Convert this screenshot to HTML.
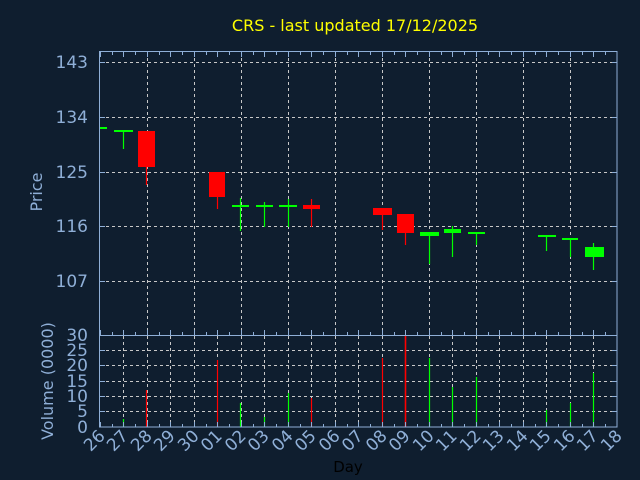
<!DOCTYPE html>
<html><head><meta charset="utf-8"><style>
html,body{margin:0;padding:0;background:#0f1e2f;}
svg{display:block;font-family:"DejaVu Sans","Liberation Sans",sans-serif;}
</style></head><body>
<svg width="640" height="480" viewBox="0 0 640 480" xmlns="http://www.w3.org/2000/svg">
<defs>
<path id="tk" d="M100.5 0v-5M112.5 0v-3M123.5 0v-5M135.5 0v-3M147.5 0v-5M159.5 0v-3M170.5 0v-5M182.5 0v-3M194.5 0v-5M206.5 0v-3M217.5 0v-5M229.5 0v-3M241.5 0v-5M253.5 0v-3M264.5 0v-5M276.5 0v-3M288.5 0v-5M300.5 0v-3M311.5 0v-5M323.5 0v-3M335.5 0v-5M347.5 0v-3M358.5 0v-5M370.5 0v-3M382.5 0v-5M394.5 0v-3M405.5 0v-5M417.5 0v-3M429.5 0v-5M441.5 0v-3M452.5 0v-5M464.5 0v-3M476.5 0v-5M488.5 0v-3M499.5 0v-5M511.5 0v-3M523.5 0v-5M535.5 0v-3M546.5 0v-5M558.5 0v-3M570.5 0v-5M582.5 0v-3M593.5 0v-5M605.5 0v-3"/>
</defs>
<rect width="640" height="480" fill="#0f1e2f"/>
<text x="355" y="31" fill="#ffff00" font-size="16" text-anchor="middle">CRS - last updated 17/12/2025</text>
<g stroke="#c8c8c8" stroke-width="1" stroke-dasharray="3,3" fill="none">
<path d="M100 62.5H617M100 117.5H617M100 172.5H617M100 226.5H617M100 281.5H617"/>
<path d="M147.5 52V335M194.5 52V335M241.5 52V335M288.5 52V335M335.5 52V335M382.5 52V335M429.5 52V335M476.5 52V335M523.5 52V335M570.5 52V335"/>
<path d="M100 350.5H617M100 365.5H617M100 381.5H617M100 396.5H617M100 411.5H617"/>
<path d="M123.5 336V427M147.5 336V427M170.5 336V427M194.5 336V427M217.5 336V427M241.5 336V427M264.5 336V427M288.5 336V427M311.5 336V427M335.5 336V427M358.5 336V427M382.5 336V427M405.5 336V427M429.5 336V427M452.5 336V427M476.5 336V427M499.5 336V427M523.5 336V427M546.5 336V427M570.5 336V427M593.5 336V427"/>
</g>
<g fill="#00ff00" stroke="#00ff00">
<rect x="100" y="127" width="7" height="2" stroke="none"/>
<path d="M123.5 131V149M240.5 198V231M264.5 202V227M288.5 199V227M429.5 232V264M452.5 226V257M476.5 232V245M546.5 235V251M570.5 238V257M593.5 243V270" stroke-width="1.2"/>
<rect x="114" y="130" width="19" height="2" stroke="none"/>
<rect x="232" y="205" width="17" height="2" stroke="none"/>
<rect x="256" y="205" width="17" height="2" stroke="none"/>
<rect x="279" y="205" width="18" height="2" stroke="none"/>
<rect x="420" y="232" width="19" height="4" stroke="none"/>
<rect x="444" y="229" width="17" height="4" stroke="none"/>
<rect x="468" y="232" width="17" height="2" stroke="none"/>
<rect x="538" y="235" width="18" height="2" stroke="none"/>
<rect x="562" y="238" width="16" height="2" stroke="none"/>
<rect x="585" y="247" width="19" height="10" stroke="none"/>
</g>
<g fill="#ff0000" stroke="#ff0000">
<path d="M146.5 167V185M217.5 197V209M311.5 199V227M382.5 215V230M405.5 233V245" stroke-width="1.2"/>
<rect x="138" y="131" width="17" height="36" stroke="none"/>
<rect x="209" y="172" width="16" height="25" stroke="none"/>
<rect x="303" y="205" width="17" height="4" stroke="none"/>
<rect x="373" y="208" width="19" height="7" stroke="none"/>
<rect x="397" y="214" width="17" height="19" stroke="none"/>
</g>
<g stroke-width="1.2">
<path d="M123.5 427V419M240.5 427V403M264.5 427V417M288.5 427V393M429.5 427V358M452.5 427V387M476.5 427V377M546.5 427V410M570.5 427V403M593.5 427V373" stroke="#00ff00"/>
<path d="M146.5 427V390M217.5 427V360M311.5 427V398M382.5 427V358" stroke="#ff0000"/>
<path d="M405.5 427V336" stroke="#ff0000" stroke-width="1.6"/>
</g>
<g stroke="#8fafd7" fill="none">
<rect x="99.5" y="51.5" width="517.5" height="375.5"/>
<path d="M100 335.5H617"/>
<use href="#tk" transform="translate(0 427)"/>
<use href="#tk" transform="translate(0 335)"/>
<use href="#tk" transform="translate(0 52) scale(1 -1)"/>
<path d="M100 62.5h5M100 117.5h5M100 172.5h5M100 226.5h5M100 281.5h5M612 62.5h5M612 117.5h5M612 172.5h5M612 226.5h5M612 281.5h5"/>
<path d="M100 350.5h5M100 365.5h5M100 381.5h5M100 396.5h5M100 411.5h5M612 350.5h5M612 365.5h5M612 381.5h5M612 396.5h5M612 411.5h5"/>
</g>
<g fill="#8fafd7" font-size="17" text-anchor="end">
<text x="88" y="68">143</text><text x="88" y="123">134</text><text x="88" y="178">125</text><text x="88" y="232">116</text><text x="88" y="287">107</text>
<text x="88" y="341">30</text><text x="88" y="356">25</text><text x="88" y="371">20</text><text x="88" y="387">15</text><text x="88" y="402">10</text><text x="88" y="417">5</text><text x="88" y="433">0</text>
</g>
<text transform="translate(42 192) rotate(-90)" fill="#8fafd7" font-size="16" text-anchor="middle">Price</text>
<text transform="translate(53 381) rotate(-90)" fill="#8fafd7" font-size="16" text-anchor="middle">Volume (0000)</text>
<g fill="#8fafd7" font-size="17" text-anchor="end">
<text transform="translate(106 437) rotate(-45)">26</text>
<text transform="translate(129 437) rotate(-45)">27</text>
<text transform="translate(153 437) rotate(-45)">28</text>
<text transform="translate(176 437) rotate(-45)">29</text>
<text transform="translate(200 437) rotate(-45)">30</text>
<text transform="translate(223 437) rotate(-45)">01</text>
<text transform="translate(247 437) rotate(-45)">02</text>
<text transform="translate(270 437) rotate(-45)">03</text>
<text transform="translate(294 437) rotate(-45)">04</text>
<text transform="translate(317 437) rotate(-45)">05</text>
<text transform="translate(341 437) rotate(-45)">06</text>
<text transform="translate(364 437) rotate(-45)">07</text>
<text transform="translate(388 437) rotate(-45)">08</text>
<text transform="translate(411 437) rotate(-45)">09</text>
<text transform="translate(435 437) rotate(-45)">10</text>
<text transform="translate(458 437) rotate(-45)">11</text>
<text transform="translate(482 437) rotate(-45)">12</text>
<text transform="translate(505 437) rotate(-45)">13</text>
<text transform="translate(529 437) rotate(-45)">14</text>
<text transform="translate(552 437) rotate(-45)">15</text>
<text transform="translate(576 437) rotate(-45)">16</text>
<text transform="translate(599 437) rotate(-45)">17</text>
<text transform="translate(623 437) rotate(-45)">18</text>
</g>
<text x="348" y="472" fill="#000000" font-size="15" text-anchor="middle">Day</text>
</svg>
</body></html>
